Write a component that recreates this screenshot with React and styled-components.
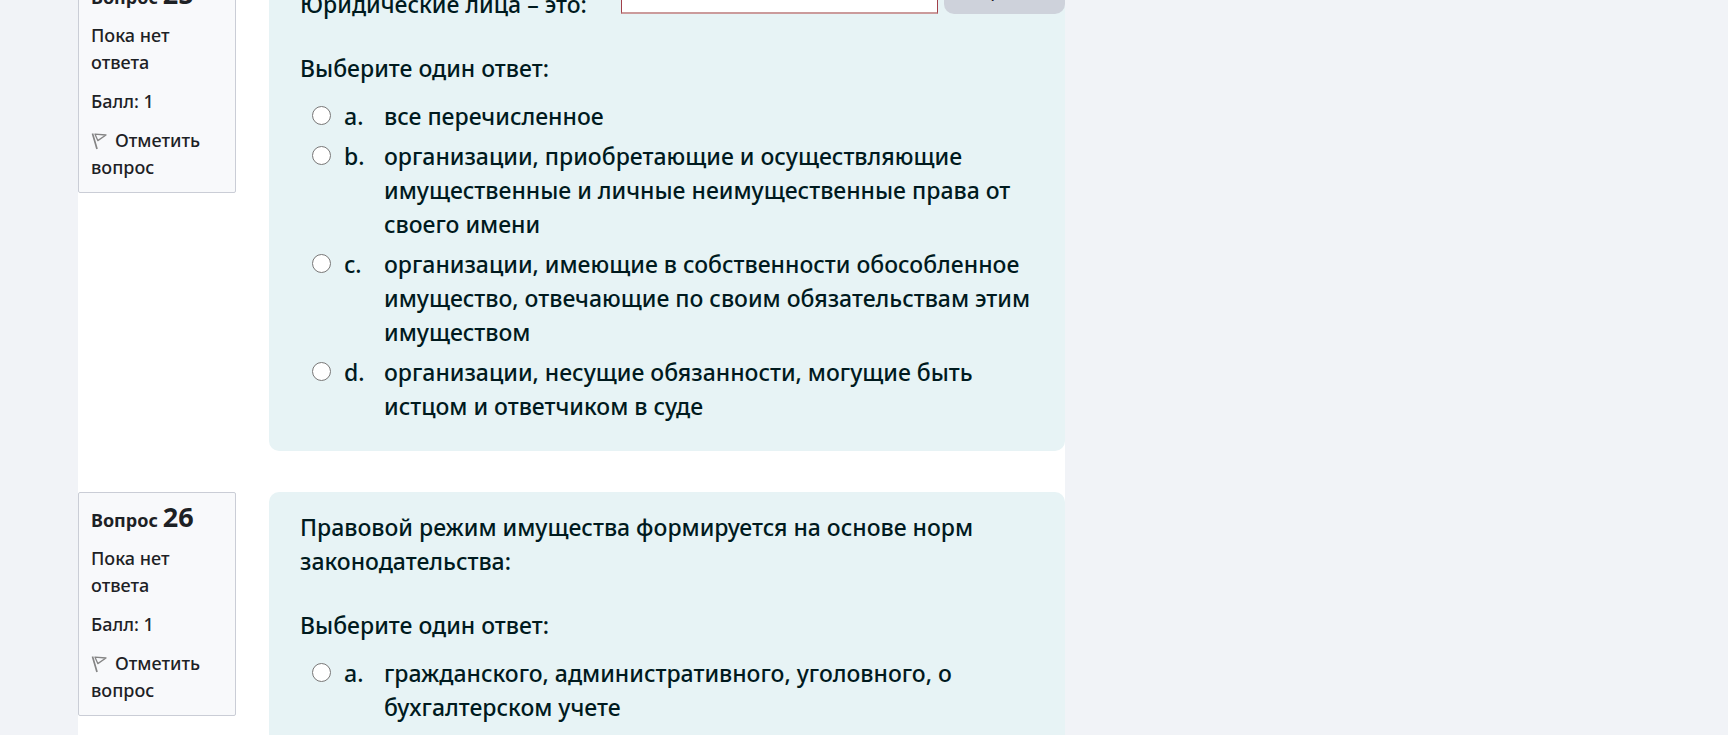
import React from "react";
import styled, { createGlobalStyle } from "styled-components";

const GlobalStyle = createGlobalStyle`
  *, *::before, *::after { box-sizing: border-box; }
  body {
    margin: 0;
    background: #f1f3f7;
    color: #1d2125;
    font-family: "Noto Sans", sans-serif;
    font-size: 18px;
    font-weight: 500;
    line-height: 27px;
  }
`;

const Viewport = styled.div`
  height: 100vh;
  overflow: hidden;
  display: flex;
  align-items: flex-start;
  padding-left: 78px;
`;

const QuizForm = styled.form`
  flex: 1;
  max-width: 987px;
  margin-top: -31px;
  display: flex;
  flex-direction: column;
  gap: 41px;
  background: #fff;
`;

const Question = styled.section`
  display: grid;
  grid-template-columns: 158px minmax(0, 1fr);
  gap: 33px;
  align-items: start;
`;

const Info = styled.aside`
  display: flex;
  flex-direction: column;
  gap: 12px;
  padding: 13px 12px 11px;
  background: #f8f9fb;
  border: 1px solid #cacdd6;
  border-radius: 2px;
`;

const InfoTitle = styled.h3`
  display: flex;
  align-items: baseline;
  gap: 5px;
  height: 27px;
  margin: 0;
  font-size: 18px;
  font-weight: 700;
`;

const Number = styled.span`
  font-size: 27px;
  line-height: 22px;
`;

const InfoText = styled.div`
  max-width: 100px;
`;

const FlagLink = styled.a`
  color: inherit;
  text-decoration: none;

  svg {
    width: 16px;
    height: 18px;
    margin-right: 8px;
    vertical-align: -3px;
  }
`;

const Card = styled.div`
  min-height: 300px;
  padding-bottom: 28px;
  background: #e7f3f5;
  border-radius: 10px;
  color: #001a1e;
  font-size: 23px;
  line-height: 34px;
`;

const PromptRow = styled.div`
  display: flex;
  align-items: flex-start;
  gap: 6px;
  padding-left: 31px;
`;

const Prompt = styled.p`
  flex: 1;
  margin: 0;
  padding-top: 18px;
  padding-right: 25px;
`;

const LookupInput = styled.input`
  width: 317px;
  height: 45px;
  padding: 0 12px;
  background: #fff;
  border: 1px solid #a2404a;
  border-bottom: 2px solid #cb9a9b;
  font: inherit;
`;

const LookupButton = styled.button`
  width: 121px;
  height: 45px;
  padding: 0 0 2px 6px;
  background: #ced2db;
  border: 0;
  border-radius: 10px;
  color: #1d2125;
  font: inherit;
  font-size: 16px;
`;

const Answers = styled.fieldset`
  display: flex;
  flex-direction: column;
  gap: 6px;
  margin: 30px 0 0;
  padding: 0 31px;
  border: 0;
`;

const Legend = styled.legend`
  margin-bottom: 14px;
  padding: 0;
`;

const Answer = styled.label`
  display: grid;
  grid-template-columns: 20px 28px minmax(0, 1fr);
  column-gap: 12px;
  padding-left: 12px;
`;

const Radio = styled.input`
  width: 19px;
  height: 19px;
  margin: 7px 0 0;
`;

const Flag = () => (
  <svg viewBox="0 0 16 18" fill="none" stroke="#858585" aria-hidden="true">
    <path d="M1.5 1.5 6 17" strokeWidth="1.7" />
    <path d="M4 2.2 15 3 6.8 8.6Z" strokeWidth="1.3" strokeLinejoin="round" />
  </svg>
);

const questions = [
  {
    number: 25,
    prompt: "Юридические лица – это:",
    lookup: true,
    answers: [
      "все перечисленное",
      "организации, приобретающие и осуществляющие имущественные и личные неимущественные права от своего имени",
      "организации, имеющие в собственности обособленное имущество, отвечающие по своим обязательствам этим имуществом",
      "организации, несущие обязанности, могущие быть истцом и ответчиком в суде",
    ],
  },
  {
    number: 26,
    prompt: "Правовой режим имущества формируется на основе норм законодательства:",
    answers: ["гражданского, административного, уголовного, о бухгалтерском учете"],
  },
];

export default function App() {
  return (
    <>
      <GlobalStyle />
      <Viewport>
        <QuizForm>
          {questions.map((q) => (
            <Question key={q.number}>
              <Info>
                <InfoTitle>
                  Вопрос <Number>{q.number}</Number>
                </InfoTitle>
                <InfoText>Пока нет ответа</InfoText>
                <InfoText>Балл: 1</InfoText>
                <FlagLink href="#flag">
                  <Flag />
                  Отметить вопрос
                </FlagLink>
              </Info>
              <Card>
                <PromptRow>
                  <Prompt>{q.prompt}</Prompt>
                  {q.lookup && (
                    <>
                      <LookupInput type="text" aria-label={q.prompt} />
                      <LookupButton type="button">Спросить</LookupButton>
                    </>
                  )}
                </PromptRow>
                <Answers>
                  <Legend>Выберите один ответ:</Legend>
                  {q.answers.map((text, i) => (
                    <Answer key={text}>
                      <Radio type="radio" name={`q${q.number}`} />
                      <span>{"abcd"[i]}.</span>
                      <span>{text}</span>
                    </Answer>
                  ))}
                </Answers>
              </Card>
            </Question>
          ))}
        </QuizForm>
      </Viewport>
    </>
  );
}
